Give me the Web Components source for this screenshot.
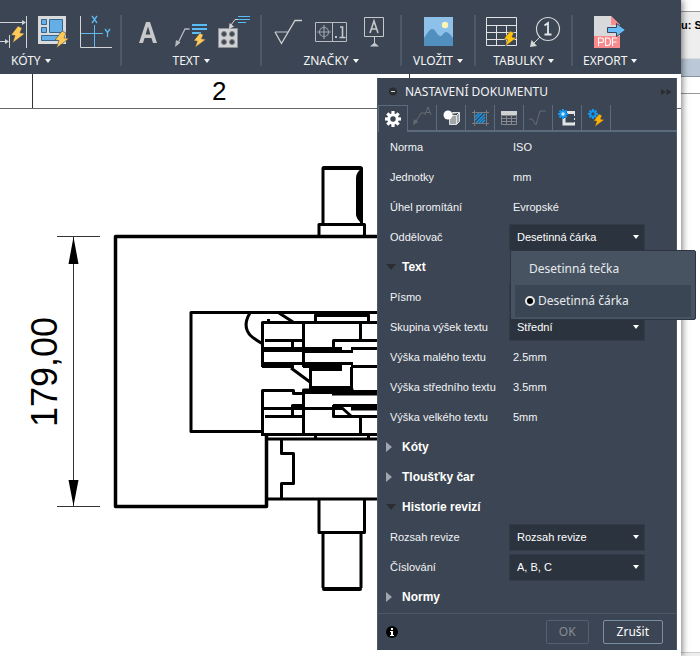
<!DOCTYPE html>
<html lang="cs">
<head>
<meta charset="utf-8">
<title>Nastavení dokumentu</title>
<style>
html, body { height: 100%; }
body { margin: 0; background: #fff; color: #f2f4f6; font-family: "Liberation Sans", Arial, sans-serif; font-size: 11px; overflow: hidden; }
</style>
</head>
<body>
<drawing-app></drawing-app>
<script>
const define = (name, html, setup) => {
  const template = document.createElement('template');
  template.innerHTML = html;
  customElements.define(name, class extends HTMLElement {
    constructor() {
      super();
      this.attachShadow({ mode: 'open' }).append(template.content.cloneNode(true));
    }
    connectedCallback() { if (setup && !this.ready) { this.ready = true; setup(this, this.shadowRoot); } }
  });
};

const bolt = (x, y, s = 1, fill = '#ffc957') =>
  `<path transform="translate(${x} ${y}) scale(${s})" fill="${fill}" stroke="#3c4553" stroke-width=".6" d="M8 0 1 9l4 .6L2.500 17 15 7.500l-5-.7L12 2z"/>`;

const icons = {
  autodim: `<g fill="none" stroke="#d2d4d6" stroke-width="1"><path d="M0 7.500h24M26.500 1v32M0 26.500h8M9.500 20v13"/></g><path fill="#d2d4d6" d="M22 5l4 2.500-4 2.500zM5 24l4 2.500L5 29z"/>${bolt(10, 11)}`,
  sheet: `<path fill="#d9dadb" d="M0 1h28v28H0z"/><g fill="#65aee6" stroke="#35668e"><path d="M3.500 4.500h5v5h-5zM11.500 4.500h13v13h-13zM3.500 12.500h5v5h-5zM3.500 20.500h17v5h-17z"/></g>${bolt(16, 16)}`,
  ordinate: `<path fill="none" stroke="#d2d4d6" d="M.500 1v31.500H32"/><path fill="none" stroke="#5fb7ee" d="M14.500 10v22M1 18.500h22"/><path fill="none" stroke="#5fb7ee" stroke-width="1.300" d="M12 1l5 7M17 1l-5 7M25 14l2.500 3.500V22M30 14l-2.500 3.500"/>`,
  letter: `<path fill="#c7c8ca" fill-rule="evenodd" d="M7 28 14 7h4l7 21h-4l-1.600-5h-6.800L11 28zM13.600 19.500h4.800L16 11.500z"/>`,
  leader: `<path fill="none" stroke="#b6b9bd" stroke-width="1.300" d="M2 30 10 14h4.500"/><path fill="#b6b9bd" d="M0 32l1-7 4.500 2.600z"/><path stroke="#58bdf5" stroke-width="2" d="M17 10h15M17 14h15M17 18h9"/>${bolt(18, 18, .85)}`,
  holes: `<path fill="#d0d1d3" stroke="#8e9196" d="M.500 13.500h19v19H.500z"/><g fill="#3f4652" stroke="#7d828a"><circle cx="6" cy="19" r="2.500"/><circle cx="14" cy="19" r="2.500"/><circle cx="6" cy="27" r="2.500"/><circle cx="14" cy="27" r="2.500"/></g><path fill="none" stroke="#d0d1d3" d="M13 10 17 4.500h3"/><path fill="#d0d1d3" d="M11 14l.500-6 4.500 3.500z"/><path stroke="#58bdf5" d="M20 1.500h12M20 4.500h12M20 7.500h8"/>`,
  surface: `<path fill="none" stroke="#9da2a9" stroke-width="1.400" d="M3 17h13"/><path fill="none" stroke="#d0d1d3" stroke-width="1.300" d="M3 17l6.500 11.500L23 5.500h7"/>`,
  tolerance: `<path fill="none" stroke="#b8bbbf" d="M.500 7.500h31v19h-31zM17.500 7.500v19"/><g fill="none" stroke="#9da2a9" stroke-width="1.200"><circle cx="9" cy="17" r="4.500"/><path d="M2 17h14M9 10v14"/></g><path fill="none" stroke="#c7c8ca" stroke-width="1.600" d="M25 12h2.500v10.500M24.500 22.500h6"/><path fill="#c7c8ca" d="M20 21h2v2h-2z"/>`,
  datum: `<path fill="none" stroke="#c7c8ca" d="M6.500 2.500h19v19h-19zM16.500 21.500V29"/><path fill="none" stroke="#c7c8ca" stroke-width="1.600" d="M12 18l4-12 4 12M13.300 14h5.400"/><path fill="#c7c8ca" d="M12 31.500l4.500-4 4.500 4z"/>`,
  picture: `<path fill="#8dc1ea" d="M2 2h29v29H2z"/><path fill="#508fbe" d="M2 23C5 19 7 15 9.500 14c4-1 6 8 9.500 7 2-1 3-4 5-4s4 2 7 6v8H2z"/><circle cx="23" cy="10" r="3.200" fill="#fdf3b6"/>`,
  table: `<path fill="none" stroke="#e0e2e4" d="M.500 2.500h30v28H.500zM.500 10.500h30M.500 17.500h30M.500 24.500h30M10.500 10v20M20.500 10v20"/>${bolt(17, 16, .9, '#ffc20a')}`,
  balloon: `<circle cx="19" cy="14" r="11.500" fill="none" stroke="#d4d6d8" stroke-width="1.200"/><path fill="none" stroke="#e5e6e8" stroke-width="1.800" d="M15.500 10.500 19 8v11.500M15.500 19.500h7"/><path stroke="#d4d6d8" d="M11 22l-6 6"/><path fill="#d4d6d8" d="M1 32l1.500-7L8 31z"/>`,
  pdf: `<path fill="#d8d9da" d="M0 1h17l9 9v11H0z"/><path fill="#fb8a8c" d="M17 1l9 9h-9zM0 21h26v12H0z"/><path fill="none" stroke="#fff" stroke-width="1.100" d="M4.500 31v-8h2.800a2 2 0 0 1 0 4.500H4.500M11.500 23v7.500h2q3 0 3-3.700T13.500 23zM18.500 31v-8h4.500M18.500 27h4"/><path fill="#66bdfa" stroke="#3c4553" d="M13.500 12.500h9v-4L31.500 15l-9 6.500v-4h-9z"/>`
};

define('tool-group', `
<style>
:host { display: flex; flex-direction: column; flex: none; box-sizing: border-box; min-width: 72px; padding: 15px 10px 0; height: 100%; color: #f4f5f6; font: 12px/16px "Noto Sans", sans-serif; }
:host([open-start]) { padding-left: 0; padding-right: 8px; }
.icons { display: flex; gap: 11px; justify-content: center; height: 34px; }
.icons button { padding: 0; border: 0; background: none; width: 32px; height: 34px; flex: none; }
:host([open-start]) .icons { gap: 10px; }
:host([open-start]) .icons button:first-child { width: 28px; }
.icons svg { display: block; width: 100%; height: 100%; overflow: visible; }
.label { display: flex; gap: 4px; align-items: center; align-self: center; margin: 4px 0 0; padding: 0; border: 0; background: none; color: inherit; font: inherit; white-space: nowrap; }
:host([open-start]) .label { align-self: flex-start; padding-left: 11px; }
.label i { border: 3px solid transparent; border-top: 4px solid #f4f5f6; border-bottom: 0; }
</style>
<div class="icons"></div><button class="label"><span></span><i></i></button>`,
(el, root) => {
  root.querySelector('span').textContent = el.getAttribute('label');
  root.querySelector('.icons').innerHTML = el.getAttribute('icons').split(' ').map(n => {
    return `<button aria-label="${n}"><svg fill="none">${icons[n]}</svg></button>`;
  }).join('');
});

define('app-toolbar', `
<style>
:host { display: flex; height: 74px; background: #3c4553; overflow: hidden; }
hr { flex: none; width: 2px; height: 51px; margin: 15px 0 0; border: 0; background: #4c5968; }
</style>
<tool-group open-start label="KÓTY" icons="autodim sheet ordinate"></tool-group><hr>
<tool-group label="TEXT" icons="letter leader holes"></tool-group><hr>
<tool-group label="ZNAČKY" icons="surface tolerance datum"></tool-group><hr>
<tool-group label="VLOŽIT" icons="picture"></tool-group><hr>
<tool-group label="TABULKY" icons="table balloon"></tool-group><hr>
<tool-group label="EXPORT" icons="pdf"></tool-group>`);

define('drawing-sheet', `
<style>
:host { display: block; background: #fff; color: #000; }
svg { display: block; width: 100%; height: 100%; }
text { font-family: "Liberation Sans", Arial, sans-serif; fill: #000; }
</style>
<svg aria-label="Výkres"><g transform="translate(0 -74)" fill="none" stroke="#000">
<g stroke="#333"><path d="M32.500 74v34M409.500 74v34"/><line x1="0" y1="108.500" x2="100%" y2="108.500" stroke="#666"/></g>
<text x="212" y="100" font-size="26" stroke="none">2</text>
<path stroke="#333" d="M57 236.500h43M57 506.500h43M73.500 237v269"/>
<path fill="#000" stroke="none" d="M73.500 237l5 27h-10zM73.500 506l5-26h-10z"/>
<text transform="translate(57 427) rotate(-90)" font-size="36" stroke="none">179,00</text>
<g stroke-width="3" stroke-linejoin="round">
<path stroke-width="3.500" d="M568 236.500H115.500v270h151V434"/>
<path d="M319 236v-11.500h45.500V236M323 224V168h38.500v56"/>
<path stroke-width="4" stroke-linecap="round" d="M324 168h36"/>
<path fill="#000" stroke="none" d="M362 168c-4 3-6 6-6 10v36c0 4 3 7 6 10z"/>
<path d="M262 431.500h-71V312.500H568"/>
<path d="M250 313c-5 8-5 16 0 22q4 4 13 9M279 313l14 9"/>
<path d="M315.500 323v-8h53v8"/><path stroke-width="4" d="M315 315h53"/>
<path d="M262.500 367V322.500H568M303.500 322v45M360.500 322v19M265 340.500h39M292.500 340v10M333.500 348v-7.500H568M351 348.500H568M303 351.500h50M262 363.500h91M351 366.500H568"/>
<path stroke-width="5" d="M262 349.500h42M303 349.500h39M262 365.500h32M303 365.500h39"/>
<path d="M267 320.500h3M291 368l19 14M310.500 367v22M351.500 367v22M310 388.500h42"/><path stroke-width="4" d="M312 369h30"/>
<path stroke-width="4" d="M312 388h40"/>
<path d="M262.500 436V390.500h31v3h10M303.500 435v-45h50M351 391.500H568M262 408.500h80M304 405.500h-11.500v11M265 416.500h39M360.500 416v19M333.500 405v11.500H568M333 405.500H568M341 407l10 9"/>
<path stroke-width="5" d="M303 391.500h39M332 393H568M351 408H568"/>
<path d="M262 434.500H568M266 439H568M315.500 434v5M368.500 434v5"/>
<path d="M281.500 439v14.500h12v30h-12V499M266 499H568"/>
<path d="M319 499v33.500h45.500V499M323 532v56M361 532v56"/>
<path stroke-width="4" stroke-linecap="round" d="M324 589h36"/>
</g></g></svg>`);

define('section-row', `
<style>
:host { display: block; }
button { display: flex; align-items: center; width: 100%; height: 30px; padding: 0 9px; border: 0; background: none; color: #fff; font: bold 12px/16px "Liberation Sans", Arial, sans-serif; text-align: left; }
i { width: 16px; height: 10px; display: flex; align-items: center; }
i::before { content: ""; border: 5px solid transparent; border-left: 6px solid #a0a6af; border-right: 0; }
:host([open]) i::before { border: 5px solid transparent; border-top: 6px solid #2b2d31; border-bottom: 0; }
</style>
<button><i></i><slot></slot></button>`,
(el, root) => root.querySelector('button').setAttribute('aria-expanded', el.hasAttribute('open')));

define('setting-row', `
<style>
:host { display: grid; grid-template-columns: 119px 1fr; align-items: center; height: 30px; padding-left: 13px; line-height: 14px; }
label, .name { white-space: nowrap; }
.value { padding-left: 4px; }
.field { position: relative; width: 136px; display: flex; align-items: center; }
select { appearance: none; width: 100%; height: 27px; box-sizing: border-box; margin: 0; padding: 0 20px 0 7px; border: 1px solid #323b47; border-radius: 0; background: #2b333e; color: #fff; font: inherit; }
.field i { position: absolute; right: 6px; border: 3px solid transparent; border-top: 4px solid #fff; border-bottom: 0; pointer-events: none; }
</style>`,
(el, root) => {
  const name = el.getAttribute('name'), value = el.getAttribute('value');
  const holder = document.createElement('template');
  holder.innerHTML = el.hasAttribute('choice')
    ? `<label for="f">${name}</label><div class="field"><select id="f"><option>${value}</option></select><i></i><slot></slot></div>`
    : `<span class="name">${name}</span><span class="value">${value}</span>`;
  root.append(holder.content);
});

define('choice-menu', `
<style>
:host { display: block; position: absolute; z-index: 5; left: 1px; top: 26px; width: 186px; box-sizing: border-box; padding: 2px 4px; border: 1px solid #2c3541; border-radius: 2px; background: #475361; color: #e6e9ec; font: 12px/16px "Noto Sans", sans-serif; }
label { display: flex; align-items: center; height: 32px; padding-left: 14px; white-space: nowrap; }
input { appearance: none; position: absolute; margin: 0; opacity: 0; }
label.on { background: #3b4654; padding-left: 10px; gap: 3px; }
label.on input { position: static; opacity: 1; box-sizing: border-box; width: 10px; height: 10px; border: 2px solid #e8e8e8; border-radius: 50%; background: #000; }
</style>
<label><input type="radio" name="sep">Desetinná tečka</label>
<label class="on"><input type="radio" name="sep" checked>Desetinná čárka</label>`);

const gear = (x, y, r, fill, hole) => {
  let teeth = '';
  for (let a = 0; a < 360; a += 45) teeth += `<path transform="rotate(${a})" d="M${-r * .2} ${-r}h${r * .4}v${r}h${-r * .4}z"/>`;
  return `<g transform="translate(${x} ${y})" fill="${fill}">${teeth}<circle r="${r * .72}"/><circle r="${r * .34}" fill="${hole}"/></g>`;
};
const tabs = [
  ['Dokument', gear(14, 12, 8, '#fff', '#3c4553')],
  ['Anotace', `<path fill="none" stroke="#686c71" d="M7 18l6-10h4M17 10l3-8 3 8M18 7.500h4"/><path fill="#686c71" d="M5 20l1-6 4 3z"/>`],
  ['Geometrie', `<path fill="#a2a5aa" stroke="#e1e2e3" d="M12.500 10.500l3-3h7v9l-3 3h-7zM12.500 10.500h7l3-3M19.500 10.500v9"/><circle cx="11" cy="10" r="4.500" fill="#fff"/>`],
  ['Listy', `<path stroke="#1598ee" stroke-width="1.400" d="M9 12l4-4M9 15l7-7M10 18l9-9M13 18l6-6M16 18l3-3"/><path fill="none" stroke="#777b80" d="M8.500 5v16M20.500 5v16M6 7.500h17M6 18.500h17"/>`],
  ['Tabulky', `<path fill="#d0d1d3" d="M6 6h16v4H6z"/><path fill="none" stroke="#868a8f" d="M6.500 10.500h15v9h-15zM11.500 10v10M16.500 10v10M6 13.500h16M6 16.500h16"/>`],
  ['Povrch', `<path fill="none" stroke="#686c71" d="M5 14h3l4 6 4-14h6"/>`],
  ['Pohled', `<path fill="none" stroke="#e3e4e5" stroke-width="3" d="M14 7.500h8M11 13v6h11"/><path fill="none" stroke="#e3e4e5" stroke-dasharray="2 2" d="M21.500 9v10"/>${gear(10, 9, 5, '#1598ee', '#cfe9fb')}`],
  ['Automatizace', `${gear(11, 9, 5, '#1598ee', '#3c4553')}${bolt(11, 9, .75, '#ffb000')}`]
];

define('dialog-tabs', `
<style>
:host { display: block; padding-left: 1px; }
nav { display: flex; height: 27px; box-sizing: border-box; background: linear-gradient(#5b6b7c, #5b6b7c) 30px 100% / 100% 2px no-repeat; }
button { width: 29px; height: 25px; padding: 0; border: 0; border-right: 1px solid #5b6b7c; background: none; }
button:first-child { width: 30px; height: 27px; border: 1px solid #5b6b7c; border-bottom: 0; }
svg { display: block; width: 28px; height: 25px; overflow: hidden; }
</style>
<nav role="tablist"></nav>`,
(el, root) => {
  root.querySelector('nav').innerHTML = tabs.map(([n, p], i) => `<button role="tab" aria-label="${n}" aria-selected="${!i}"><svg>${p}</svg></button>`).join('');
});

define('settings-dialog', `
<style>
:host { display: block; width: 300px; box-sizing: border-box; background: #3c4553; box-shadow: inset 1px 0 #4c5b6b, inset -1px 0 #4c5b6b; }
header { display: flex; align-items: center; height: 27px; padding: 0 5px 0 12px; gap: 8px; font: 12px/16px "Noto Sans", sans-serif; }
h1 { flex: 1; margin: 0; font: inherit; white-space: nowrap; }
header button { padding: 0; border: 0; background: none; height: 12px; }
header svg, footer svg { display: block; }
.rows { padding-bottom: 1px; }
footer { display: flex; align-items: center; gap: 14px; height: 37px; box-sizing: border-box; padding: 0 14px 0 9px; border-top: 1px solid #4c5968; font: 12px/16px "Noto Sans", sans-serif; }
.info { margin-right: auto; padding: 0; border: 0; background: none; }
.act { height: 24px; padding: 0 13px; border: 1px solid #7b8da1; border-radius: 2px; background: none; color: #fff; font: inherit; }
.act:disabled { padding: 0 12px; border-color: #526172; color: #858d97; }
</style>
<header><button aria-label="Sbalit"><svg width="8" height="12"><circle cx="4" cy="5.500" r="4" fill="#2a2c30"/><path stroke="#ddd" d="M2 5.500h4"/></svg></button><h1>NASTAVENÍ DOKUMENTU</h1><button aria-label="Ukotvit"><svg width="11" height="12"><path fill="#2a2c30" d="M0 3l5 3-5 3zM5.500 3l5 3-5 3z"/></svg></button></header>
<dialog-tabs></dialog-tabs>
<div class="rows">
<setting-row name="Norma" value="ISO"></setting-row>
<setting-row name="Jednotky" value="mm"></setting-row>
<setting-row name="Úhel promítání" value="Evropské"></setting-row>
<setting-row name="Oddělovač" value="Desetinná čárka" choice><choice-menu></choice-menu></setting-row>
<section-row open>Text</section-row>
<setting-row name="Písmo" value="" choice></setting-row>
<setting-row name="Skupina výšek textu" value="Střední" choice></setting-row>
<setting-row name="Výška malého textu" value="2.5mm"></setting-row>
<setting-row name="Výška středního textu" value="3.5mm"></setting-row>
<setting-row name="Výška velkého textu" value="5mm"></setting-row>
<section-row>Kóty</section-row>
<section-row>Tloušťky čar</section-row>
<section-row open>Historie revizí</section-row>
<setting-row name="Rozsah revize" value="Rozsah revize" choice></setting-row>
<setting-row name="Číslování" value="A, B, C" choice></setting-row>
<section-row>Normy</section-row>
</div>
<footer><button class="info" aria-label="Informace"><svg width="12" height="12"><circle cx="6" cy="6" r="6" fill="#000"/><path fill="#fff" d="M5 2h2v2H5zM4 5h3v4h1v1H4V9h1V6H4z"/></svg></button><button class="act" disabled>OK</button><button class="act">Zrušit</button></footer>`);

define('back-window', `
<style>
:host { display: flex; flex-direction: column; min-width: 0; overflow: hidden; color: #000; background: #fff; }
.caption { height: 12px; box-sizing: border-box; border-bottom: 1px solid #999; }
.bar { height: 47px; box-sizing: border-box; padding-top: 5px; background: #eee; border-bottom: 1px solid #ddd; font: bold 11px/16px "Liberation Sans", Arial, sans-serif; white-space: nowrap; }
.head { height: 18px; box-sizing: border-box; background: #bac8d7; border-bottom: 1px solid #8c959e; }
.line { height: 17px; box-sizing: border-box; border-bottom: 1px solid #999; }
.body { flex: 1; }
.status { height: 3px; background: #eee; border-top: 1px solid #ccc; }
</style>
<div class="caption"></div><div class="bar">u: S</div><div class="head"></div><div class="line"></div><div class="body"></div><div class="status"></div>`);

define('drawing-app', `
<style>
:host { display: grid; grid-template-columns: 1fr 19px; height: 100vh; }
.window { display: flex; flex-direction: column; min-width: 0; position: relative; z-index: 1; box-shadow: 1px 0 7px rgba(0,0,0,.55); }
.stage { flex: 1; min-height: 0; position: relative; }
drawing-sheet { height: 100%; }
settings-dialog { position: absolute; top: 4px; right: 4px; }
</style>
<div class="window"><app-toolbar></app-toolbar><div class="stage"><drawing-sheet></drawing-sheet><settings-dialog></settings-dialog></div></div>
<back-window></back-window>`);
</script>
</body>
</html>
